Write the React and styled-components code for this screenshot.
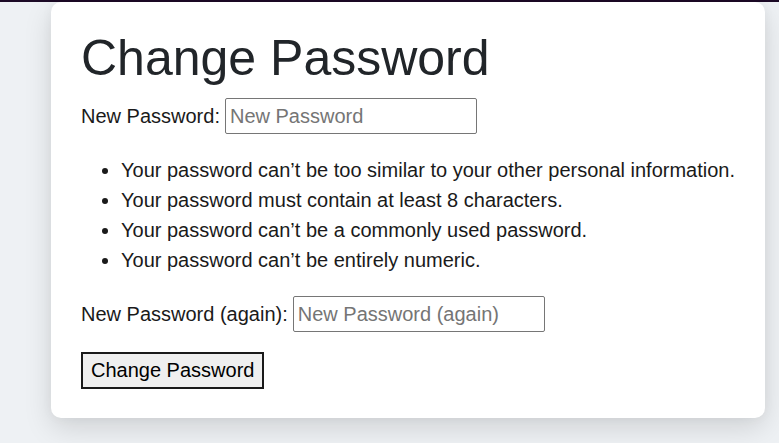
import React from "react";
import styled, { createGlobalStyle } from "styled-components";

const Global = createGlobalStyle`
  html, body { margin: 0; padding: 0; }
  body {
    background: #eef1f4;
    font-family: "Liberation Sans", Arial, sans-serif;
    font-size: 20px;
    line-height: 1.5;
    color: #212529;
    overflow: hidden;
  }
`;

const TopBar = styled.div`
  height: 2px;
  background: #1c0a26;
`;

const Page = styled.div`
  padding: 0 14px 40px 51px;
`;

const Card = styled.form`
  box-sizing: border-box;
  width: 714px;
  background: #fff;
  border-radius: 10px;
  padding: 26px 20px 29px 30px;
  box-shadow: 0 10px 28px rgba(0, 0, 0, 0.13), 0 0 12px rgba(0, 0, 0, 0.04);
`;

const Title = styled.h1`
  margin: 0 0 10px 0;
  font-size: 50px;
  font-weight: 400;
  line-height: 60px;
  color: #212529;
`;

const FieldRow = styled.div`
  display: flex;
  align-items: center;
  gap: 5px;
  height: 36px;
`;

const Label = styled.label`
  color: #1a1a1a;
  white-space: nowrap;
`;

const Input = styled.input`
  box-sizing: border-box;
  width: 252px;
  height: 36px;
  padding: 4px 4px;
  border: 1px solid #767676;
  border-radius: 2px;
  font-family: "Liberation Sans", Arial, sans-serif;
  font-size: 20px;
  color: #000;
  &::placeholder { color: #757575; }
`;

const Rules = styled.ul`
  margin: 21px 0 21px 0;
  padding-left: 40px;
  line-height: 30px;
  color: #1a1a1a;
`;

const Rule = styled.li`
  white-space: nowrap;
`;

const Submit = styled.button`
  margin-top: 20px;
  height: 37px;
  padding: 0 8px;
  background: #efefef;
  border: 2px solid #1a1a1a;
  border-radius: 0;
  font-family: "Liberation Sans", Arial, sans-serif;
  font-size: 20px;
  color: #000;
`;

const rules = [
  "Your password can’t be too similar to your other personal information.",
  "Your password must contain at least 8 characters.",
  "Your password can’t be a commonly used password.",
  "Your password can’t be entirely numeric.",
];

export default function App() {
  return (
    <>
      <Global />
      <TopBar />
      <Page>
        <Card onSubmit={(e) => e.preventDefault()}>
          <Title>Change Password</Title>
          <FieldRow>
            <Label htmlFor="pw1">New Password:</Label>
            <Input id="pw1" type="password" placeholder="New Password" />
          </FieldRow>
          <Rules>
            {rules.map((r) => (
              <Rule key={r}>{r}</Rule>
            ))}
          </Rules>
          <FieldRow>
            <Label htmlFor="pw2">New Password (again):</Label>
            <Input id="pw2" type="password" placeholder="New Password (again)" />
          </FieldRow>
          <Submit type="submit">Change Password</Submit>
        </Card>
      </Page>
    </>
  );
}
